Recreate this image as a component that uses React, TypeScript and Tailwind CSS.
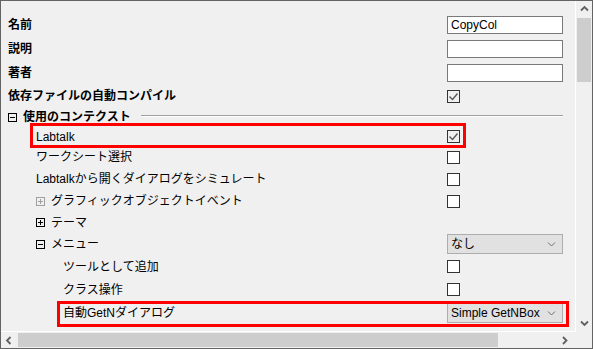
import React from 'react';

const jp = { fontFamily: '"Liberation Sans", "Noto Sans CJK JP", sans-serif' };

const Chevron: React.FC<{ dir: 'up' | 'down' | 'left' | 'right'; color?: string; bold?: boolean }> = ({
  dir,
  color = '#606060',
  bold = true,
}) => {
  const pts: Record<string, string> = {
    up: '1,5.5 4.5,2 8,5.5',
    down: '1,2.5 4.5,6 8,2.5',
    left: '5.5,1 2,4.5 5.5,8',
    right: '3,1 6.5,4.5 3,8',
  };
  return (
    <svg width="9" height="9" viewBox="0 0 9 9">
      <polyline points={pts[dir]} fill="none" stroke={color} strokeWidth={bold ? 1.8 : 1} />
    </svg>
  );
};

const Expander: React.FC<{ open?: boolean; disabled?: boolean }> = ({ open, disabled }) => {
  const c = disabled ? '#a0a0a0' : '#000';
  return (
    <svg width="9" height="9" viewBox="0 0 9 9" className="shrink-0">
      <rect x="0.5" y="0.5" width="8" height="8" fill="none" stroke={c} />
      <line x1="2" y1="4.5" x2="7" y2="4.5" stroke={c} />
      {!open && <line x1="4.5" y1="2" x2="4.5" y2="7" stroke={c} />}
    </svg>
  );
};

const Check: React.FC<{ checked?: boolean }> = ({ checked }) => (
  <div
    className={`w-[13px] h-[13px] border border-[#333333] flex items-center justify-center ${
      checked ? 'bg-[#f0f0f0]' : 'bg-white'
    }`}
  >
    {checked && (
      <svg width="11" height="11" viewBox="0 0 11 11">
        <polyline points="1.5,5.5 4.5,8.5 9.5,2.5" fill="none" stroke="#555555" strokeWidth="1.3" />
      </svg>
    )}
  </div>
);

const TextBox: React.FC<{ value?: string }> = ({ value }) => (
  <div
    className="w-[116px] h-[18px] border border-[#7a7a7a] bg-white flex items-center pl-[3px] text-[12px] text-black"
    style={jp}
  >
    {value}
  </div>
);

const Select: React.FC<{ value: string }> = ({ value }) => (
  <div
    className="w-[116px] h-[20px] border border-[#adadad] bg-[#e1e1e1] flex items-center justify-between pl-[3px] pr-[6px] text-[12px] text-black"
    style={jp}
  >
    <span>{value}</span>
    <Chevron dir="down" color="#707070" bold={false} />
  </div>
);

type RowProps = {
  h: number;
  indent: number;
  children: React.ReactNode;
  value?: React.ReactNode;
  box?: { left: number; top: number; width: number; height: number };
};

const Row: React.FC<RowProps> = ({ h, indent, children, value, box }) => (
  <div className="relative flex items-center" style={{ height: h }}>
    <div className="w-[446px] flex items-center gap-[6px] text-[12px] leading-none text-black" style={{ ...jp, paddingLeft: indent }}>
      {children}
    </div>
    <div className="w-[116px] flex items-center">{value}</div>
    {box && (
      <div
        className="absolute border-[3px] border-[#ff0000] pointer-events-none"
        style={{ left: box.left, top: box.top, width: box.width, height: box.height }}
      />
    )}
  </div>
);

const App: React.FC = () => {
  return (
    <div className="w-[593px] h-[349px] border border-[#646464] bg-[#f0f0f0] flex flex-col overflow-hidden">
      <div className="flex h-[331px]">
        {/* property grid */}
        <div className="w-[575px] h-[331px] border-r border-b border-white pt-[12px] overflow-hidden">
          <Row h={24} indent={7} value={<TextBox value="CopyCol" />}>
            <span className="font-bold">名前</span>
          </Row>
          <Row h={24} indent={7} value={<TextBox />}>
            <span className="font-bold">説明</span>
          </Row>
          <Row h={24} indent={7} value={<TextBox />}>
            <span className="font-bold">著者</span>
          </Row>
          <Row h={22} indent={7} value={<Check checked />}>
            <span className="font-bold">依存ファイルの自動コンパイル</span>
          </Row>
          <div className="flex items-center h-[20px] pl-[7px] pr-[12px] gap-[6px] text-[12px] leading-none" style={jp}>
            <Expander open />
            <span className="font-bold">使用のコンテクスト</span>
            <div className="flex-1 border-t border-[#a0a0a0] border-b-white border-b ml-[4px] -mt-[2px]" />
          </div>
          <Row h={19} indent={35} value={<Check checked />} box={{ left: 29, top: -4, width: 436, height: 25 }}>
            <span>Labtalk</span>
          </Row>
          <Row h={22} indent={35} value={<Check />}>
            <span>ワークシート選択</span>
          </Row>
          <Row h={22} indent={35} value={<Check />}>
            <span>Labtalkから開くダイアログをシミュレート</span>
          </Row>
          <Row h={22} indent={35} value={<Check />}>
            <Expander disabled />
            <span>グラフィックオブジェクトイベント</span>
          </Row>
          <Row h={21} indent={35}>
            <Expander />
            <span>テーマ</span>
          </Row>
          <Row h={22} indent={35} value={<Select value="なし" />}>
            <Expander open />
            <span>メニュー</span>
          </Row>
          <Row h={23} indent={62} value={<Check />}>
            <span>ツールとして追加</span>
          </Row>
          <Row h={23} indent={62} value={<Check />}>
            <span>クラス操作</span>
          </Row>
          <Row h={24} indent={62} value={<Select value="Simple GetNBox" />} box={{ left: 56, top: 0, width: 512, height: 26 }}>
            <span>自動GetNダイアログ</span>
          </Row>
        </div>
        {/* vertical scrollbar */}
        <div className="w-[16px] flex flex-col">
          <div className="h-[17px] flex items-center justify-center">
            <Chevron dir="up" />
          </div>
          <div className="h-[64px] mx-[1px] bg-[#cdcdcd]" />
          <div className="flex-1" />
          <div className="h-[17px] flex items-center justify-center">
            <Chevron dir="down" />
          </div>
        </div>
      </div>
      {/* horizontal scrollbar */}
      <div className="flex h-[16px]">
        <div className="w-[575px] flex items-center">
          <div className="w-[17px] flex items-center justify-center">
            <Chevron dir="left" />
          </div>
          <div className="w-[480px] h-[14px] bg-[#cdcdcd]" />
          <div className="flex-1" />
          <div className="w-[17px] flex items-center justify-center mr-[3px]">
            <Chevron dir="right" />
          </div>
        </div>
        <div className="flex-1" />
      </div>
    </div>
  );
};

export default App;
